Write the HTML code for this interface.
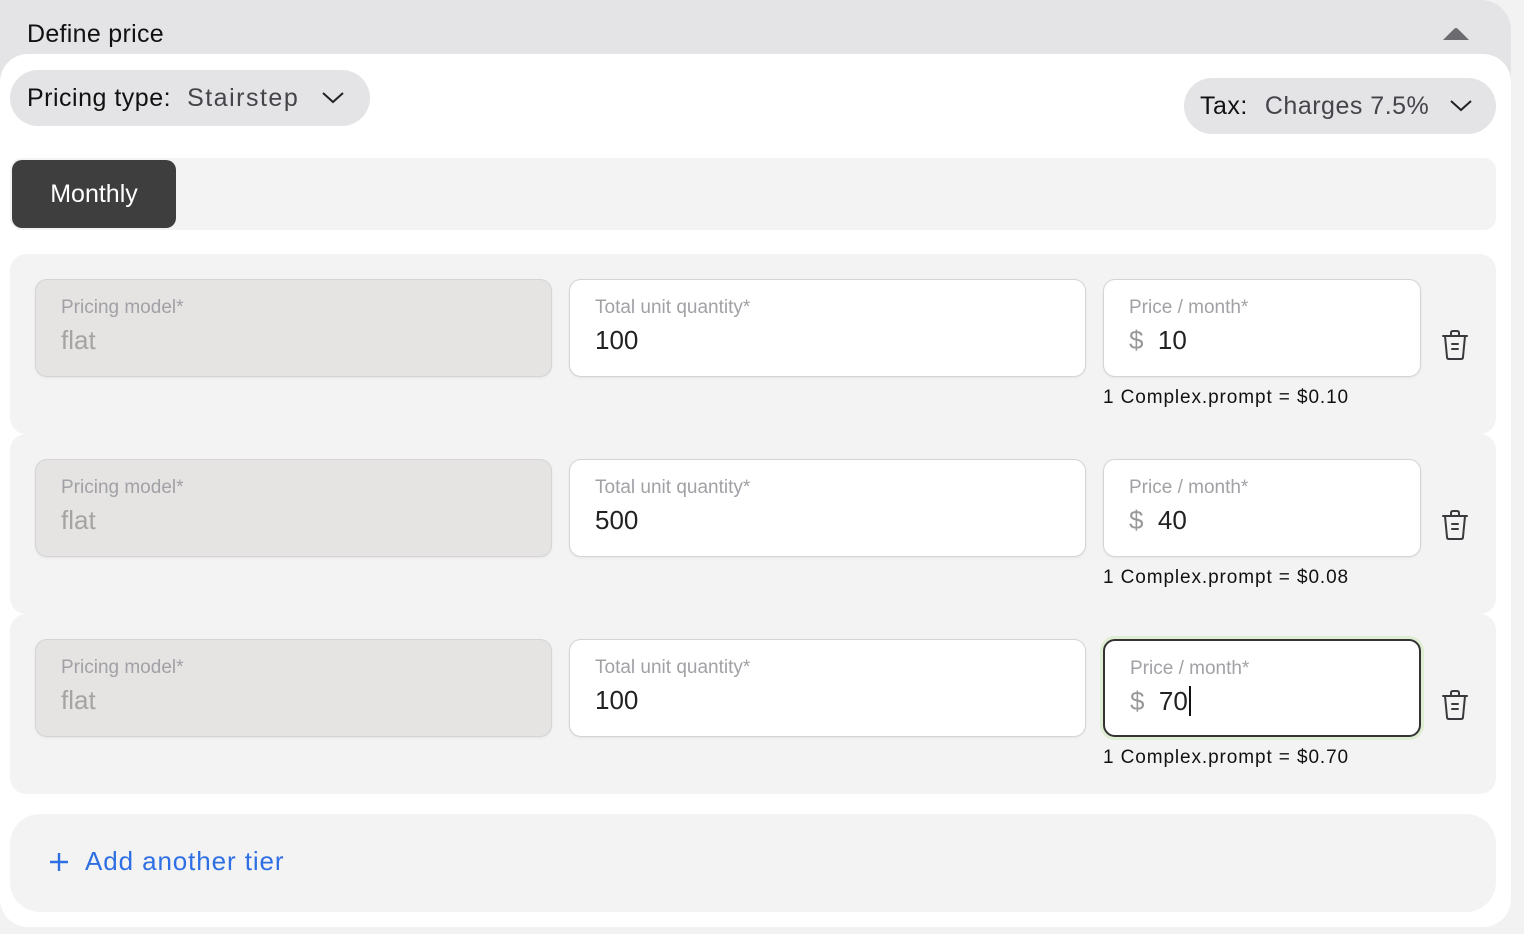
<!DOCTYPE html>
<html><head><style>
*{box-sizing:border-box;margin:0;padding:0}
body{width:1524px;height:934px;background:#f2f2f2;font-family:"Liberation Sans",sans-serif;position:relative;overflow:hidden}
.abs{position:absolute}
.hdr{left:0;top:0;width:1511px;height:120px;background:#e4e4e6;border-top-right-radius:30px}
.card{left:0;top:54px;width:1511px;height:873px;background:#fff;border-radius:28px 28px 28px 28px}
.pill{background:#e4e4e6;border-radius:30px;font-size:25px;display:flex;align-items:center;letter-spacing:0.5px}
.tier{left:10px;width:1486px;height:180px;background:#f3f3f3;border-radius:16px}
.inp{position:absolute;top:25px;height:98px;border:1.5px solid #d4d4d8;border-radius:12px;background:#fff;padding:17px 0 0 25px;box-shadow:0 1px 2px rgba(0,0,0,.06)}
.inp .l{font-size:19px;color:#a1a1a6}
.inp .v{font-size:26px;color:#222;margin-top:6px}
.inp.dis{background:#e5e4e3}
.inp.dis .v{color:#a5a3a3}
.note{position:absolute;left:1093px;top:133px;font-size:19px;color:#111;letter-spacing:0.9px}
.trash{position:absolute;left:1428px;top:74px}
</style></head><body>
<div class="abs hdr"></div>
<div class="abs" style="left:27px;top:20px;font-size:25px;color:#111;letter-spacing:0.3px">Define price</div>
<svg class="abs" style="left:1441px;top:26px" width="30" height="16"><path d="M2 14 L13 3 Q15 1 17 3 L28 14 Z" fill="#6b6b70"/></svg>
<div class="abs card"></div>
<div class="abs pill" style="left:10px;top:70px;width:360px;height:56px;padding-left:17px"><span style="color:#111">Pricing type:</span><span style="color:#44444a;margin-left:16px;letter-spacing:1.5px">Stairstep</span>
<svg style="margin-left:22px" width="24" height="14"><path d="M2 2 L12 11 L22 2" stroke="#222" stroke-width="2" fill="none"/></svg></div>
<div class="abs pill" style="left:1184px;top:78px;width:312px;height:56px;padding-left:16px"><span style="color:#111">Tax:</span><span style="color:#44444a;margin-left:17px">Charges 7.5%</span>
<svg style="margin-left:20px" width="24" height="14"><path d="M2 2 L12 11 L22 2" stroke="#222" stroke-width="2" fill="none"/></svg></div>
<div class="abs" style="left:10px;top:158px;width:1486px;height:72px;background:#f3f3f3;border-radius:12px"></div>
<div class="abs" style="left:12px;top:160px;width:164px;height:68px;background:#3e3e3e;border-radius:10px;color:#fff;font-size:25px;text-align:center;line-height:68px">Monthly</div>

<div class="abs tier" style="top:254px">
<div class="inp dis" style="left:25px;width:517px"><div class="l">Pricing model*</div><div class="v">flat</div></div>
<div class="inp" style="left:559px;width:517px"><div class="l">Total unit quantity*</div><div class="v">100</div></div>
<div class="inp" style="left:1093px;width:318px"><div class="l">Price / month*</div><div class="v"><span style="color:#999">$</span>&nbsp; 10</div></div>
<div class="note">1 Complex.prompt = $0.10</div>
<svg class="trash" width="34" height="34" viewBox="0 0 34 34"><path d="M5 8 H29 M13 8 V5 Q13 3 15 3 H19 Q21 3 21 5 V8 M7 8 L9 29 Q9 31 11 31 H23 Q25 31 25 29 L27 8 M14 16 H20 M14 21 H20" stroke="#3a3a3e" stroke-width="2" fill="none" stroke-linecap="round"/></svg>
</div>
<div class="abs tier" style="top:434px">
<div class="inp dis" style="left:25px;width:517px"><div class="l">Pricing model*</div><div class="v">flat</div></div>
<div class="inp" style="left:559px;width:517px"><div class="l">Total unit quantity*</div><div class="v">500</div></div>
<div class="inp" style="left:1093px;width:318px"><div class="l">Price / month*</div><div class="v"><span style="color:#999">$</span>&nbsp; 40</div></div>
<div class="note">1 Complex.prompt = $0.08</div>
<svg class="trash" width="34" height="34" viewBox="0 0 34 34"><path d="M5 8 H29 M13 8 V5 Q13 3 15 3 H19 Q21 3 21 5 V8 M7 8 L9 29 Q9 31 11 31 H23 Q25 31 25 29 L27 8 M14 16 H20 M14 21 H20" stroke="#3a3a3e" stroke-width="2" fill="none" stroke-linecap="round"/></svg>
</div>
<div class="abs tier" style="top:614px">
<div class="inp dis" style="left:25px;width:517px"><div class="l">Pricing model*</div><div class="v">flat</div></div>
<div class="inp" style="left:559px;width:517px"><div class="l">Total unit quantity*</div><div class="v">100</div></div>
<div class="inp" style="left:1093px;width:318px;border:2px solid #333;box-shadow:0 0 0 3px #dfeed3"><div class="l">Price / month*</div><div class="v"><span style="color:#999">$</span>&nbsp; 70<span style="border-left:2px solid #111;margin-left:1px"></span></div></div>
<div class="note">1 Complex.prompt = $0.70</div>
<svg class="trash" width="34" height="34" viewBox="0 0 34 34"><path d="M5 8 H29 M13 8 V5 Q13 3 15 3 H19 Q21 3 21 5 V8 M7 8 L9 29 Q9 31 11 31 H23 Q25 31 25 29 L27 8 M14 16 H20 M14 21 H20" stroke="#3a3a3e" stroke-width="2" fill="none" stroke-linecap="round"/></svg>
</div>

<div class="abs" style="left:10px;top:814px;width:1486px;height:98px;background:#f3f3f3;border-radius:30px"></div>
<svg class="abs" style="left:48px;top:851px" width="22" height="22"><path d="M11 2 V20 M2 11 H20" stroke="#2f6fe4" stroke-width="2.4"/></svg>
<div class="abs" style="left:85px;top:846px;font-size:26px;color:#2f6fe4;letter-spacing:0.9px">Add another tier</div>
</body></html>
